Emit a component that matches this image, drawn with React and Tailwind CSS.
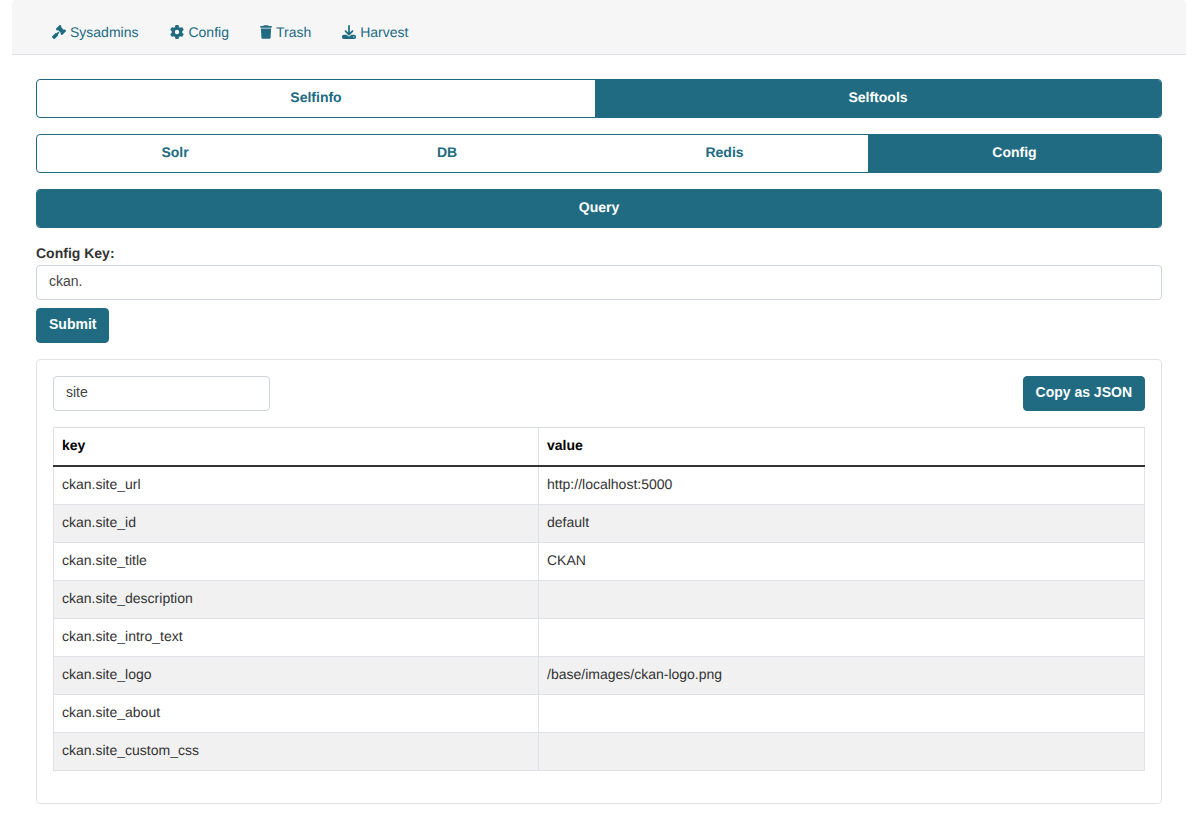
import { FaGavel, FaGear, FaTrash, FaDownload } from "react-icons/fa6";

const navItems = [
  { label: "Sysadmins", icon: FaGavel, iconClass: "w-[14px]", itemClass: "" },
  { label: "Config", icon: FaGear, iconClass: "w-[14px]", itemClass: "mr-[-1px]" },
  { label: "Trash", icon: FaTrash, iconClass: "w-[12px]", itemClass: "mr-[-1px]" },
  { label: "Harvest", icon: FaDownload, iconClass: "w-[14px]", itemClass: "" },
];

const rows = [
  ["ckan.site_url", "http://localhost:5000"],
  ["ckan.site_id", "default"],
  ["ckan.site_title", "CKAN"],
  ["ckan.site_description", ""],
  ["ckan.site_intro_text", ""],
  ["ckan.site_logo", "/base/images/ckan-logo.png"],
  ["ckan.site_about", ""],
  ["ckan.site_custom_css", ""],
];

function Tab({ label, active, className }) {
  return (
    <div
      className={`flex items-center justify-center pb-[3px] text-sm font-bold ${active ? "bg-[#206b82] text-white" : "text-[#206b82]"} ${className}`}
    >
      {label}
    </div>
  );
}

export default function App() {
  return (
    <div className="min-h-[828px] bg-white font-['Liberation_Sans',Arial,sans-serif] text-sm text-[#333333] [text-rendering:geometricPrecision]">
      <div className="mx-3 flex h-[55px] items-center gap-8 rounded-t border-b border-[#dee2e6] bg-[#f6f6f6] pl-[40px] pt-[9px]">
        {navItems.map(({ label, icon: Icon, iconClass, itemClass }) => (
          <a key={label} className={`flex items-center gap-1 text-[#206b82] ${itemClass}`}>
            <Icon size={14} className={iconClass} />
            {label}
          </a>
        ))}
      </div>

      <div className="px-9 pt-6">
        <div className="flex h-[39px] overflow-hidden rounded border border-[#206b82]">
          <Tab label="Selfinfo" className="w-[558px]" />
          <Tab label="Selftools" active className="flex-1" />
        </div>

        <div className="mt-4 flex h-[39px] overflow-hidden rounded border border-[#206b82]">
          <Tab label="Solr" className="w-[276px]" />
          <Tab label="DB" className="w-[268px]" />
          <Tab label="Redis" className="w-[287px]" />
          <Tab label="Config" active className="flex-1" />
        </div>

        <div className="mt-4 flex h-[39px] overflow-hidden rounded border border-[#206b82]">
          <Tab label="Query" active className="flex-1" />
        </div>

        <div className="mt-[15px] h-[21px] font-bold leading-[21px]">Config Key:</div>
        <input
          readOnly
          value="ckan."
          className="mt-px block h-[35px] w-full rounded border border-[#ced4da] bg-white px-3 pb-[4px] text-sm text-[#444444] outline-none"
        />
        <button className="mt-2 block h-[35px] rounded border border-[#206b82] bg-[#206b82] px-3 pb-[3px] text-sm font-bold text-white">
          Submit
        </button>

        <div className="mt-4 h-[445px] rounded border border-[#e3e3e3] p-4">
          <div className="flex items-start justify-between">
            <input
              readOnly
              value="site"
              className="block h-[35px] w-[217px] rounded border border-[#ced4da] bg-white px-3 pb-[4px] text-sm text-[#444444] outline-none"
            />
            <button className="h-[35px] rounded border border-[#206b82] bg-[#206b82] px-3 pb-[3px] text-sm font-bold text-white">
              Copy as JSON
            </button>
          </div>

          <table className="mt-4 w-full table-fixed border-collapse">
            <thead>
              <tr className="h-[38px] border-b-2 border-b-[#333333]">
                <th className="w-[485px] border border-b-0 border-[#dee2e6] px-2 pb-[2px] text-left font-bold text-black">key</th>
                <th className="border border-b-0 border-[#dee2e6] px-2 pb-[2px] text-left font-bold text-black">value</th>
              </tr>
            </thead>
            <tbody>
              {rows.map(([key, value], i) => {
                const pad = i === 0 ? "pb-[3px]" : "pb-[4px]";
                return (
                  <tr key={key} className={`${i === 0 ? "h-[39px]" : "h-[38px]"} ${i % 2 === 1 ? "bg-[#f1f1f1]" : "bg-white"}`}>
                    <td className={`border border-[#dee2e6] px-2 ${pad}`}>{key}</td>
                    <td className={`border border-[#dee2e6] px-2 ${pad}`}>{value}</td>
                  </tr>
                );
              })}
            </tbody>
          </table>
        </div>
      </div>
    </div>
  );
}
